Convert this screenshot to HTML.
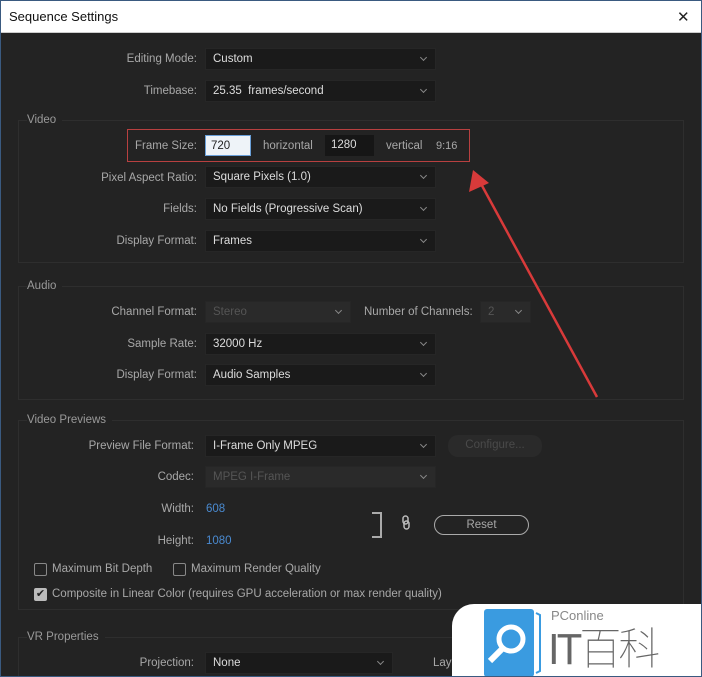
<!DOCTYPE html>
<html><head><meta charset="utf-8"><style>
*{margin:0;padding:0;box-sizing:border-box}
html,body{width:702px;height:677px;overflow:hidden}
body{background:#232323;font-family:"Liberation Sans",sans-serif;font-size:11.5px;color:#a8a8a8;position:relative}
.t{position:absolute;white-space:nowrap}
.title{position:absolute;left:0;top:0;width:702px;height:33px;background:#fff;color:#111;font-size:13px;padding:9px 0 0 9px;border-bottom:1px solid #ccc}
.lab{position:absolute;text-align:right;width:197px;white-space:nowrap}
.dd{position:absolute;height:22px;background:#1a1a1a;border:1px solid #262626;color:#ddd;padding:4px 0 0 7px;white-space:nowrap}
.dd:after{content:"";position:absolute;right:9px;top:6px;width:4px;height:4px;border-right:1px solid #888;border-bottom:1px solid #888;transform:rotate(45deg)}
.dis{color:#555;background:#2a2a2a}
.box{position:absolute;border:1px solid #2e2e2e}
.sec{position:absolute;color:#9a9a9a;background:#232323;padding-right:6px}
.cb{position:absolute;width:13px;height:13px;border:1px solid #888;border-radius:2px}
</style></head><body>
<div style="position:absolute;left:0;top:0;width:702px;height:677px;border:1px solid #3a5a80;pointer-events:none;z-index:5"></div>
<div class="title">Sequence Settings</div>
<div class="t" style="left:677px;top:8px;color:#222;font-size:15px">✕</div>

<div class="lab" style="left:0;top:53px">Editing Mode:</div>
<div class="dd" style="left:205px;top:48px;width:231px">Custom</div>
<div class="lab" style="left:0;top:85px">Timebase:</div>
<div class="dd" style="left:205px;top:80px;width:231px">25.35&nbsp; frames/second</div>

<div class="box" style="left:18px;top:120px;width:666px;height:143px"></div>
<div class="sec" style="left:27px;top:114px">Video</div>
<div style="position:absolute;left:127px;top:129px;width:343px;height:33px;border:1px solid #b84040"></div>
<div class="lab" style="left:0;top:140px">Frame Size:</div>
<div style="position:absolute;left:205px;top:135px;width:46px;height:21px;background:#eef3f8;border:1px solid #6a9fd8;color:#222;padding:4px 0 0 5px">720</div>
<div class="t" style="left:263px;top:140px">horizontal</div>
<div style="position:absolute;left:325px;top:135px;width:49px;height:21px;background:#161616;color:#ddd;padding:4px 0 0 6px">1280</div>
<div class="t" style="left:386px;top:140px">vertical</div>
<div class="t" style="left:436px;top:140px;font-size:11px">9:16</div>
<div class="lab" style="left:0;top:172px">Pixel Aspect Ratio:</div>
<div class="dd" style="left:205px;top:166px;width:231px">Square Pixels (1.0)</div>
<div class="lab" style="left:0;top:203px">Fields:</div>
<div class="dd" style="left:205px;top:198px;width:231px">No Fields (Progressive Scan)</div>
<div class="lab" style="left:0;top:235px">Display Format:</div>
<div class="dd" style="left:205px;top:230px;width:231px">Frames</div>

<div class="box" style="left:18px;top:286px;width:666px;height:114px"></div>
<div class="sec" style="left:27px;top:280px">Audio</div>
<div class="lab" style="left:0;top:306px">Channel Format:</div>
<div class="dd dis" style="left:205px;top:301px;width:146px">Stereo</div>
<div class="t" style="left:364px;top:306px">Number of Channels:</div>
<div class="dd dis" style="left:480px;top:301px;width:51px">2</div>
<div class="lab" style="left:0;top:338px">Sample Rate:</div>
<div class="dd" style="left:205px;top:333px;width:231px">32000 Hz</div>
<div class="lab" style="left:0;top:369px">Display Format:</div>
<div class="dd" style="left:205px;top:364px;width:231px">Audio Samples</div>

<div class="box" style="left:18px;top:420px;width:666px;height:190px"></div>
<div class="sec" style="left:27px;top:414px">Video Previews</div>
<div class="lab" style="left:-3px;top:440px">Preview File Format:</div>
<div class="dd" style="left:205px;top:435px;width:231px">I-Frame Only MPEG</div>
<div style="position:absolute;left:448px;top:435px;width:94px;height:22px;background:#2a2a2a;border-radius:10px;color:#4a4a4a;text-align:center;padding-top:4px">Configure...</div>
<div class="lab" style="left:-3px;top:471px">Codec:</div>
<div class="dd dis" style="left:205px;top:466px;width:231px">MPEG I-Frame</div>
<div class="lab" style="left:-3px;top:503px">Width:</div>
<div class="t" style="left:206px;top:503px;color:#4a8ad0">608</div>
<div class="lab" style="left:-3px;top:535px">Height:</div>
<div class="t" style="left:206px;top:535px;color:#4a8ad0">1080</div>
<div style="position:absolute;left:372px;top:512px;width:10px;height:26px;border:2px solid #aaa;border-left:none"></div>
<svg style="position:absolute;left:401px;top:515px" width="10" height="16"><rect x="2" y="1" width="5" height="8" rx="2.5" stroke="#bbb" stroke-width="1.5" fill="none"/><rect x="3" y="6" width="5" height="8" rx="2.5" stroke="#bbb" stroke-width="1.5" fill="none"/></svg>
<div style="position:absolute;left:434px;top:515px;width:95px;height:20px;border:1px solid #aaa;border-radius:10px;text-align:center;padding-top:3px">Reset</div>
<div class="cb" style="left:34px;top:563px"></div>
<div class="t" style="left:52px;top:563px">Maximum Bit Depth</div>
<div class="cb" style="left:173px;top:563px"></div>
<div class="t" style="left:191px;top:563px">Maximum Render Quality</div>
<div class="cb" style="left:34px;top:588px;background:#bbb;border-color:#bbb;color:#222;font-size:11px;text-align:center;line-height:11px">✔</div>
<div class="t" style="left:52px;top:588px">Composite in Linear Color (requires GPU acceleration or max render quality)</div>

<div class="box" style="left:18px;top:637px;width:666px;height:60px"></div>
<div class="sec" style="left:27px;top:631px">VR Properties</div>
<div class="lab" style="left:-3px;top:657px">Projection:</div>
<div class="dd" style="left:205px;top:652px;width:188px">None</div>
<div class="t" style="left:433px;top:657px">Lay</div>

<svg style="position:absolute;left:0;top:0" width="702" height="677">
<line x1="597" y1="397" x2="480" y2="182" stroke="#d83a3a" stroke-width="2.5"/>
<polygon points="473,170 469,192 489,183" fill="#d83a3a"/>
</svg>

<div style="position:absolute;left:452px;top:604px;width:252px;height:75px;background:#fff;border-top-left-radius:22px"></div>
<svg style="position:absolute;left:484px;top:609px" width="60" height="68">
<rect x="0" y="0" width="50" height="68" rx="3" fill="#3a9be0"/>
<path d="M52 4 L56 6 L56 62 L52 64" stroke="#3a9be0" stroke-width="2" fill="none"/>
<circle cx="27" cy="30" r="12" stroke="#fff" stroke-width="5" fill="none"/>
<line x1="18" y1="40" x2="6" y2="52" stroke="#fff" stroke-width="6"/>
</svg>
<div class="t" style="left:551px;top:608px;color:#888;font-size:13px">PConline</div>
<div class="t" style="left:548px;top:626px;color:#666;font-size:44px;line-height:48px;font-family:'Liberation Sans','Noto Sans CJK SC',sans-serif;font-weight:100;letter-spacing:-3px;transform:scaleX(0.95);transform-origin:left">IT百科</div>
</body></html>
